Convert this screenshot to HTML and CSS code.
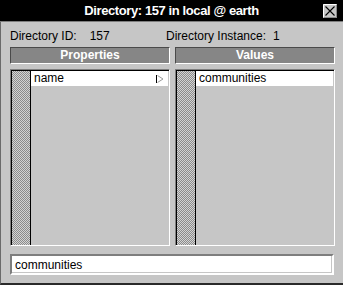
FILE: index.html
```html
<!DOCTYPE html>
<html lang="en">
<head>
  <meta charset="UTF-8" />
  <title>Directory: 157 in local @ earth</title>
  <link rel="stylesheet" href="styles.css">
</head>
<body>
  <div class="window">
    <div class="titlebar">
      <span></span>
      <span class="title">Directory: 157 in local @ earth</span>
      <button class="close" title="Close">
        <svg width="14" height="14" viewBox="0 0 14 14">
          <rect x="0.5" y="0.5" width="13" height="13" fill="#c6c6c6" stroke="#8a8a8a"/>
          <path d="M0.5 13.5V0.5H13.5" fill="none" stroke="#fff"/>
          <path d="M2.5 2.5L11.5 11.5M11.5 2.5L2.5 11.5" stroke="#000" stroke-width="1.1"/>
        </svg>
      </button>
    </div>

    <div class="info">
      <div class="info-item"><span>Directory ID:</span><span class="num">157</span></div>
      <div class="info-item"><span>Directory Instance:</span><span class="num">1</span></div>
    </div>

    <div class="columns">
      <div class="header">Properties</div>
      <div class="header">Values</div>
    </div>

    <div class="columns lists">
      <div class="list">
        <div class="list-inner">
          <div class="gutter"></div>
          <div class="rows">
            <div class="row">
              <span>name</span>
              <svg class="cascade" width="8" height="8" viewBox="0 0 8 8">
                <path d="M1.5 7.5L7 4L1.5 0.5" fill="none" stroke="#9a9a9a"/>
                <path d="M0.5 0V8" stroke="#000"/>
              </svg>
            </div>
          </div>
        </div>
      </div>
      <div class="list">
        <div class="list-inner">
          <div class="gutter"></div>
          <div class="rows">
            <div class="row"><span>communities</span></div>
          </div>
        </div>
      </div>
    </div>

    <div class="field">
      <input type="text" value="communities" />
    </div>
  </div>
</body>
</html>
```

FILE: styles.css
```css
:root {
  --bg: #c6c6c6;
  --dark: #7e7e7e;
  --header: #868686;
  --light: #ffffff;
}
* {
  box-sizing: border-box;
}
body {
  margin: 0;
  font-family: 'Liberation Sans', Arial, sans-serif;
  font-size: 12px;
  color: #000;
}
.window {
  width: 343px;
  height: 285px;
  background: var(--bg);
  border-left: 1px solid #6a6a6a;
  border-bottom: 2px solid #2a2a2a;
  display: flex;
  flex-direction: column;
}
.titlebar {
  height: 22px;
  margin-left: -1px;
  background: #000;
  border-bottom: 1px solid var(--dark);
  display: grid;
  grid-template-columns: 1fr auto 1fr;
  align-items: center;
}
.title {
  color: #fff;
  font-weight: bold;
  font-size: 13px;
  letter-spacing: -0.4px;
  line-height: 21px;
}
.close {
  justify-self: end;
  margin-right: 6px;
  padding: 0;
  border: none;
  background: none;
  width: 14px;
  height: 14px;
  display: block;
}
.close svg {
  display: block;
}
.info {
  margin-top: 7px;
  height: 14px;
  line-height: 14px;
  padding-left: 9px;
  display: flex;
  gap: 0;
}
.info-item {
  display: flex;
  gap: 13px;
}
.info-item:first-child {
  width: 156px;
}
.info-item + .info-item {
  gap: 7px;
}
.columns {
  display: grid;
  grid-template-columns: 160px 160px;
  gap: 5px;
  padding: 0 9px;
  margin-top: 4px;
}
.header {
  height: 17px;
  line-height: 15px;
  background: var(--header);
  color: #fff;
  font-weight: bold;
  text-align: center;
  border: 1px solid;
  border-color: #4a4a4a var(--light) var(--light) #4a4a4a;
}
.lists {
  margin-top: 5px;
  height: 177px;
}
.list {
  border: 1px solid;
  border-color: var(--dark) var(--light) var(--light) var(--dark);
}
.list-inner {
  height: 100%;
  border-top: 1px solid #000;
  border-left: 1px solid #000;
  display: flex;
}
.gutter {
  width: 19px;
  border-right: 1px solid #000;
  background: repeating-conic-gradient(#8c8c8c 0 25%, #d4d4d4 0 50%) 0 0 / 2px 2px;
}
.rows {
  flex: 1;
  padding-right: 1px;
}
.row {
  height: 15px;
  line-height: 15px;
  background: var(--light);
  padding-left: 3px;
  padding-right: 4px;
  display: flex;
  justify-content: space-between;
  align-items: center;
}
.cascade {
  display: block;
}
.field {
  margin: 8px 9px 0 9px;
  height: 21px;
}
.field input {
  width: 100%;
  height: 21px;
  margin: 0;
  padding: 0 0 0 3px;
  font-family: 'Liberation Sans', Arial, sans-serif;
  font-size: 12px;
  color: #000;
  background: var(--light);
  border: 2px solid;
  border-color: var(--dark) var(--light) var(--light) var(--dark);
  box-shadow: inset -1px -1px 0 var(--bg);
  outline: none;
}
```
